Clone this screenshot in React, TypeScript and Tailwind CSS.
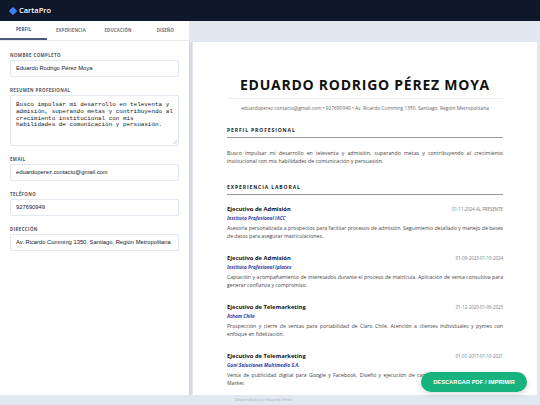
import React from "react";

const jobs = [
  {
    title: "Ejecutivo de Admisión",
    date: "01-11-2024 AL PRESENTE",
    company: "Instituto Profesional IACC",
    desc: "Asesoría personalizada a prospectos para facilitar procesos de admisión. Seguimiento detallado y manejo de bases de datos para asegurar matriculaciones.",
  },
  {
    title: "Ejecutivo de Admisión",
    date: "01-09-2023-01-10-2024",
    company: "Instituto Profesional Iplacex",
    desc: "Captación y acompañamiento de interesados durante el proceso de matrícula. Aplicación de venta consultiva para generar confianza y compromiso.",
  },
  {
    title: "Ejecutivo de Telemarketing",
    date: "01-12-2020-01-06-2023",
    company: "Athom Chile",
    desc: "Prospección y cierre de ventas para portabilidad de Claro Chile. Atención a clientes individuales y pymes con enfoque en fidelización.",
  },
  {
    title: "Ejecutivo de Telemarketing",
    date: "01-01-2017-01-10-2021",
    company: "Guni Soluciones Multimedia S.A.",
    desc: "Venta de publicidad digital para Google y Facebook. Diseño y ejecución de campañas para clientes en Google Market",
  },
];

function Label({ children }: { children: React.ReactNode }) {
  return (
    <div className="text-[4.4px] font-bold tracking-[0.4px] text-[#4b5563] leading-[6px] mb-[2px]" style={{ fontFamily: "'Open Sans', sans-serif" }}>
      {children}
    </div>
  );
}

function Field({ label, value }: { label: string; value: string }) {
  return (
    <div className="flex flex-col">
      <Label>{label}</Label>
      <div className="h-[17px] border border-[#e2e8f0] rounded-[2px] flex items-center px-[5px] text-[5.8px] text-[#111827] whitespace-nowrap overflow-hidden" style={{ fontFamily: "'Liberation Sans', Arial, sans-serif" }}>
        {value}
      </div>
    </div>
  );
}

export default function App() {
  return (
    <div className="w-[540px] h-[405px] flex flex-col overflow-hidden relative bg-[#e2e8f0]">
      <header className="h-[21px] bg-[#0f172a] flex items-center pl-[10px] gap-[3px] shrink-0">
        <div className="w-[6px] h-[6px] bg-[#3b82f6] rotate-45 rounded-[1px]" />
        <span className="text-white text-[7.5px] font-semibold" style={{ fontFamily: "'Open Sans', sans-serif" }}>
          CartaPro
        </span>
      </header>
      <div className="flex flex-1 min-h-0">
        <aside className="w-[189px] bg-white flex flex-col shrink-0">
          <div className="h-[20px] flex border-b border-[#e5e7eb]" style={{ fontFamily: "'Open Sans', sans-serif" }}>
            {["PERFIL", "EXPERIENCIA", "EDUCACIÓN", "DISEÑO"].map((t, i) => (
              <div
                key={t}
                className={
                  "flex-1 flex items-center justify-center text-[4.3px] font-bold tracking-[0.2px] " +
                  (i === 0 ? "text-[#3b4c7a] border-b-[2px] border-[#4b5a7c]" : "text-[#6b7280]")
                }
              >
                {t}
              </div>
            ))}
          </div>
          <div className="flex flex-col gap-[10px] px-[10px] pt-[11px]">
            <Field label="NOMBRE COMPLETO" value="Eduardo Rodrigo Pérez Moya" />
            <div className="flex flex-col">
              <Label>RESUMEN PROFESIONAL</Label>
              <div className="h-[51px] border border-[#e2e8f0] rounded-[2px] px-[5px] pt-[6px] text-[5.95px] leading-[6.8px] text-[#111827] relative" style={{ fontFamily: "'Liberation Mono', 'DejaVu Sans Mono', monospace" }}>
                Busco impulsar mi desarrollo en televenta y admisión, superando metas y contribuyendo al crecimiento institucional con mis habilidades de comunicación y persuasión.
                <svg className="absolute right-[1px] bottom-[1px]" width="4" height="4" viewBox="0 0 4 4">
                  <path d="M4 0 L0 4 M4 2 L2 4" stroke="#9ca3af" strokeWidth="0.5" />
                </svg>
              </div>
            </div>
            <Field label="EMAIL" value="eduardoperez.contacto@gmail.com" />
            <Field label="TELÉFONO" value="927690949" />
            <Field label="DIRECCIÓN" value="Av. Ricardo Cumming 1350, Santiago, Región Metropolitana" />
          </div>
        </aside>
        <div className="w-[3px] bg-[#d5d9e1] mt-[21px] shrink-0" />
        <main className="flex-1 min-w-0 pl-[1px] pr-[3px] pt-[21px] overflow-hidden">
          <div className="bg-white h-full px-[34px] pt-[35px]" style={{ fontFamily: "'Open Sans', sans-serif" }}>
            <h1 className="text-center text-[14px] font-bold tracking-[0.75px] text-[#111] leading-[16px]">
              EDUARDO RODRIGO PÉREZ MOYA
            </h1>
            <div className="mt-[5px] border-t border-[#eeeeee] pt-[6px] text-center text-[4.85px] text-[#666] leading-[7px] whitespace-nowrap">
              eduardoperez.contacto@gmail.com • 927690949 • Av. Ricardo Cumming 1350, Santiago, Región Metropolitana
            </div>
            <h2 className="mt-[15px] text-[5px] font-bold tracking-[0.9px] text-[#222] leading-[7px] pb-[3px] border-b border-[#999]">
              PERFIL PROFESIONAL
            </h2>
            <p className="mt-[11px] text-[5.25px] leading-[8px] text-[#444] text-justify">
              Busco impulsar mi desarrollo en televenta y admisión, superando metas y contribuyendo al crecimiento institucional con mis habilidades de comunicación y persuasión.
            </p>
            <h2 className="mt-[19px] text-[5px] font-bold tracking-[0.9px] text-[#222] leading-[7px] pb-[3px] border-b border-[#999]">
              EXPERIENCIA LABORAL
            </h2>
            <div className="flex flex-col gap-[14px] mt-[10px]">
              {jobs.map((j, i) => (
                <div key={i}>
                  <div className="flex justify-between items-baseline">
                    <span className="text-[5.8px] font-bold text-[#111] leading-[9px]">{j.title}</span>
                    <span className="text-[4.4px] text-[#777]">{j.date}</span>
                  </div>
                  <div className="text-[4.8px] font-bold italic text-[#2b3fa8] leading-[9px]">{j.company}</div>
                  <p className="text-[5.15px] leading-[8px] text-[#444] text-justify mt-[1px]">{j.desc}</p>
                </div>
              ))}
            </div>
          </div>
        </main>
      </div>
      <footer className="h-[10px] shrink-0 bg-[#e2e8f0] pl-[235px] flex items-center text-[3.8px] text-[#a0a8b8]" style={{ fontFamily: "'Open Sans', sans-serif" }}>
        Desarrollado por Eduardo Pérez
      </footer>
      <button className="absolute left-[421px] top-[372px] w-[106px] h-[20px] rounded-full bg-[#16b37e] text-white text-[5.6px] font-bold tracking-[0.1px] shadow-[0_2px_6px_rgba(0,0,0,0.15)]" style={{ fontFamily: "'Liberation Sans', Arial, sans-serif" }}>
        DESCARGAR PDF / IMPRIMIR
      </button>
    </div>
  );
}
